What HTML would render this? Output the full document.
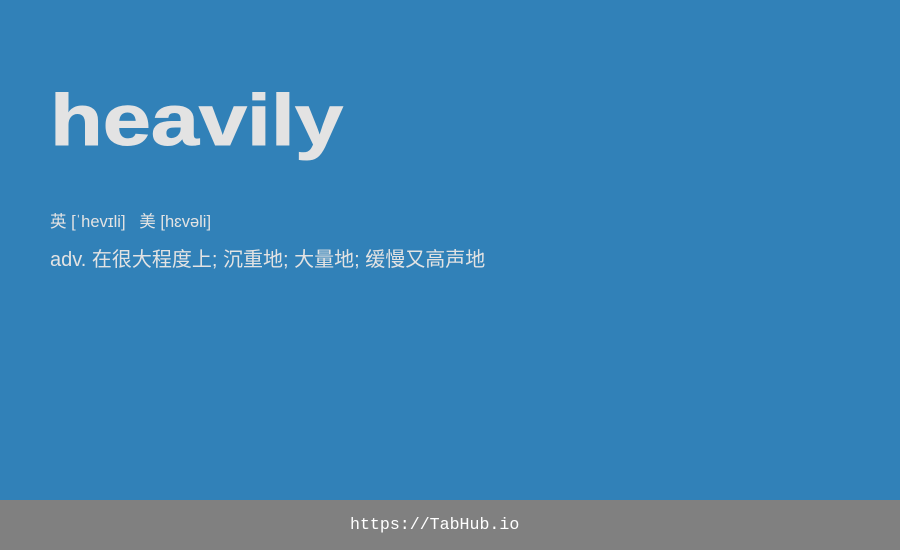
<!DOCTYPE html>
<html><head><meta charset="utf-8"><style>
body{margin:0;width:900px;height:550px;background:#3181b8;position:relative;overflow:hidden;font-family:"Liberation Sans","Noto Sans CJK SC",sans-serif;color:#e3e3e3}
h1{position:absolute;left:50px;top:76px;margin:0;font-size:72px;font-weight:bold;line-height:90px;color:#e3e3e3;transform:scaleX(1.2);transform-origin:0 0;white-space:nowrap;-webkit-text-stroke:1px #e3e3e3}
.ph{position:absolute;left:50px;top:212px;font-size:16.5px;line-height:20px;white-space:nowrap}
.def{position:absolute;left:50px;top:248px;font-size:20px;line-height:24px;white-space:nowrap}
.foot{position:absolute;left:0;top:500px;width:900px;height:50px;background:#808080;line-height:50px;font-family:"Liberation Mono",monospace;font-size:16.6px;color:#fff}
.foot span{position:absolute;left:350px}
</style></head><body>
<h1>heavily</h1>
<div class="ph">英 [ˈhevɪli] &nbsp; 美 [hɛvəli]</div>
<div class="def">adv. 在很大程度上; 沉重地; 大量地; 缓慢又高声地</div>
<div class="foot"><span>https://TabHub.io</span></div>
</body></html>
